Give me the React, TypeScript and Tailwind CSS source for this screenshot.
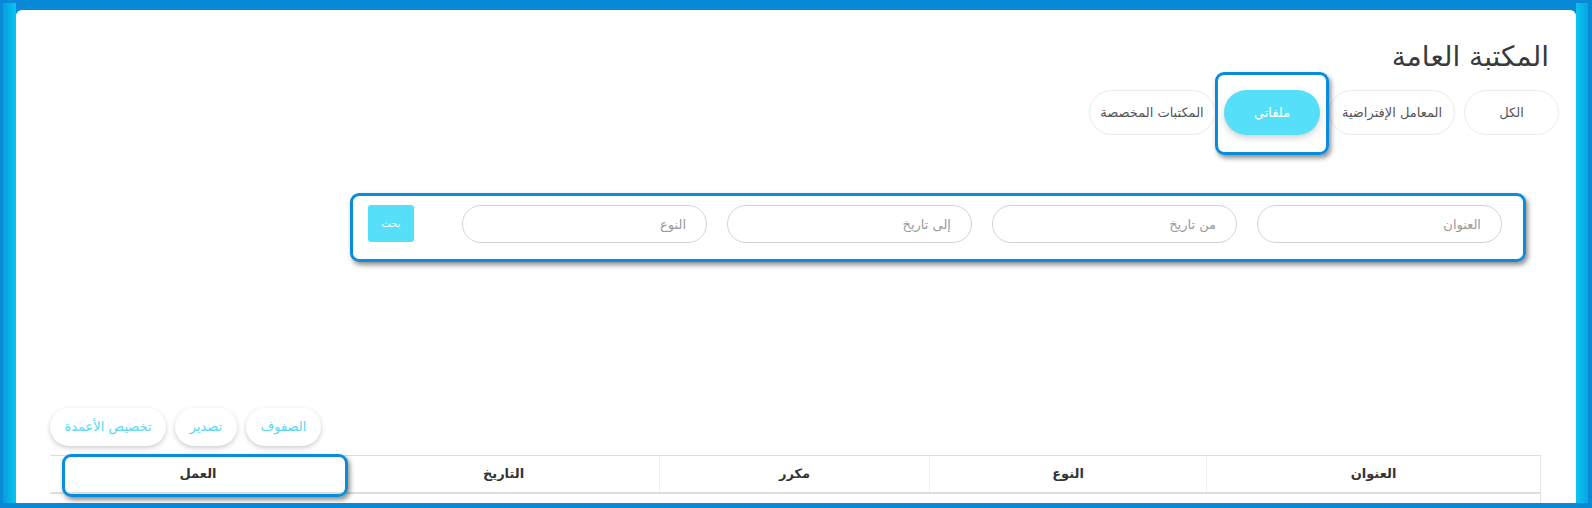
import React from "react";

const font = "font-['DejaVu_Sans',sans-serif]";

// تبويبات المكتبة
const tabs = [
  { label: "الكل", w: "w-[95px]" },
  { label: "المعامل الإفتراضية", w: "w-[126px]" },
  { label: "ملفاتي", w: "w-[96px]", active: true },
  { label: "المكتبات المخصصة", w: "w-[126px]" },
];

const filters = ["العنوان", "من تاريخ", "إلى تاريخ", "النوع"];

const toolbar = [
  { label: "الصفوف", w: "w-[75px]" },
  { label: "تصدير", w: "w-[62px]" },
  { label: "تخصيص الأعمدة", w: "w-[116px]" },
];

// أعمدة الجدول من اليمين إلى اليسار
const columns = ["العنوان", "النوع", "مكرر", "التاريخ", "العمل"];

const highlight =
  "pointer-events-none absolute rounded-[9px] border-[3px] border-[#0a8cdc] shadow-[2px_3px_5px_rgba(0,0,0,0.45)]";

export default function App() {
  return (
    <div className={`h-[508px] w-full bg-[#0a8ad6] pt-[3px] pb-[5px] pl-[3px] pr-[4px] ${font}`}>
      <div className="flex h-full">
        <div className="w-[13px] bg-gradient-to-r from-[#0a9ee0] to-[#08c4ee]" />

        <div dir="rtl" className="mt-[7px] flex flex-1 flex-col overflow-hidden rounded-t-[6px] bg-white">
          <h1 className="pt-[27px] pr-[27px] text-[28px] leading-[40px] font-normal text-[#3a3a3a]">
            المكتبة العامة
          </h1>

          {/* التبويبات */}
          <div className="mt-[13px] flex gap-[9px] pr-[17px]">
            {tabs.map(tab => (
              <div key={tab.label} className="relative">
                <button
                  type="button"
                  className={`h-[45px] ${tab.w} rounded-full text-[13px] ${
                    tab.active
                      ? "bg-[#55dff8] text-white shadow-[0_3px_6px_rgba(0,0,0,0.18)]"
                      : "border border-[#ebebeb] bg-white text-[#555]"
                  }`}
                >
                  {tab.label}
                </button>
                {tab.active && <div className={`${highlight} -inset-x-[9px] -top-[18px] -bottom-[20px]`} />}
              </div>
            ))}
          </div>

          {/* نموذج البحث */}
          <div className="mt-[58px] mr-[50px] ml-[334px] flex gap-[20px] rounded-[9px] border-[3px] border-[#0a8cdc] pt-[9px] pr-[21px] pb-[16px] pl-[15px] shadow-[2px_3px_5px_rgba(0,0,0,0.45)]">
            {filters.map(f => (
              <input
                key={f}
                type="text"
                placeholder={f}
                className="h-[38px] w-[245px] rounded-full border border-[#d4d4d4] px-[20px] text-[13px] text-[#555] outline-none placeholder:text-[#9a9a9a]"
              />
            ))}
            <button
              type="button"
              className="mr-auto h-[37px] w-[46px] rounded-[3px] bg-[#55dff8] text-[10px] text-white"
            >
              بحث
            </button>
          </div>

          {/* أزرار الجدول */}
          <div className="mt-[146px] flex justify-end gap-[9px] pl-[34px]">
            {toolbar.map(b => (
              <button
                key={b.label}
                type="button"
                className={`h-[38px] ${b.w} rounded-full bg-white text-[13px] text-[#5ad6ef] shadow-[0_2px_5px_rgba(0,0,0,0.2)]`}
              >
                {b.label}
              </button>
            ))}
          </div>

          {/* الجدول */}
          <div className="mt-[9px] mr-[35px] ml-[34px] flex-1 border-r border-[#e3e3e3]">
            <div className="grid grid-cols-[334px_277px_270px_312px_298px] border-t border-b-2 border-t-[#dedede] border-b-[#dedede]">
              {columns.map((c, i) => (
                <div
                  key={c}
                  className={`relative flex h-[36px] items-center justify-center text-[13px] font-bold text-[#333] ${
                    i < columns.length - 1 ? "border-l border-[#eeeeee]" : ""
                  }`}
                >
                  {c}
                  {c === "العمل" && <div className={`${highlight} left-[13px] -right-[1px] -top-[2px] -bottom-[5px]`} />}
                </div>
              ))}
            </div>
          </div>
        </div>

        <div className="w-[12px] bg-gradient-to-r from-[#08c4ee] to-[#0aa6e2]" />
      </div>
    </div>
  );
}
